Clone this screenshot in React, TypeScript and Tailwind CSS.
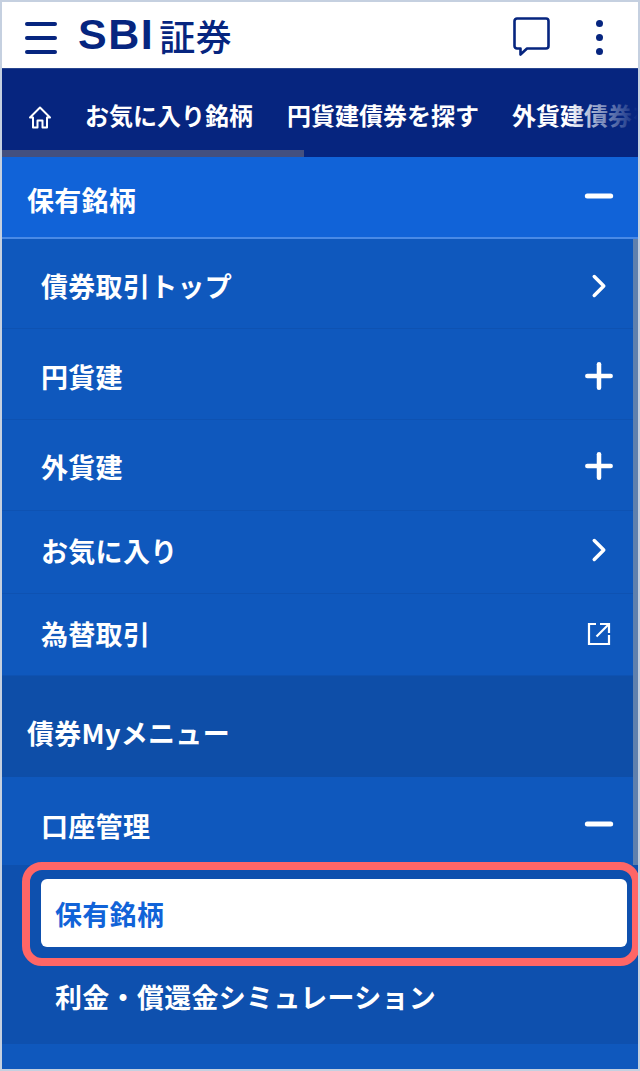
import { ChevronRight, Minus, Plus } from 'lucide-react';
import type { ReactNode } from 'react';

const font = { fontFamily: '"Noto Sans CJK JP", "Noto Sans", sans-serif' };

function OpenIcon() {
  return (
    <svg width="24" height="24" viewBox="0 0 24 24" fill="none" stroke="white" strokeWidth="2.2">
      <path d="M9 2H2v20h20v-9" />
      <path d="M13 2h9v9" />
      <path d="M22 2 9.500 14.500" />
    </svg>
  );
}

function HomeIcon() {
  return (
    <svg className="mt-[5px] shrink-0" width="24" height="23" viewBox="0 0 24 23" fill="none" stroke="white" strokeWidth="2" strokeLinejoin="round">
      <path d="M2 11.500 12 1.500l10 10h-3V21.500h-4.500V14.500h-5V21.500H5V11.500z" />
    </svg>
  );
}

function MenuRow({ label, height, nudge, icon }: { label: string; height: string; nudge: string; icon: ReactNode }) {
  return (
    <div className={`flex items-center justify-between border-b border-[#0e52b2] pl-[39px] pr-[19px] ${height} ${nudge}`}>
      <span className="text-[27px] font-bold leading-none tracking-[0.3px] text-white">{label}</span>
      <span className="flex w-10 justify-center text-white">{icon}</span>
    </div>
  );
}

export default function App() {
  const chevron = <ChevronRight size={38} strokeWidth={2.2} />;
  const plus = <Plus size={40} strokeWidth={2.7} />;

  return (
    <div className="h-[1071px] w-[640px] overflow-hidden border-2 border-[#c5d0e0] bg-[#0f58bd]" style={font}>
      {/* header */}
      <header className="flex h-[66px] items-center bg-white pl-[23px] pr-[35px]">
        <div className="mt-[6px] flex w-8 flex-col gap-[10px]">
          <span className="h-1 rounded-full bg-[#06257f]" />
          <span className="h-1 rounded-full bg-[#06257f]" />
          <span className="h-1 rounded-full bg-[#06257f]" />
        </div>
        <div className="mb-[1px] ml-[21px] flex items-center text-[#06257f]">
          <span className="text-[43px] font-bold leading-none tracking-[1.500px]" style={{ fontFamily: '"Liberation Sans", sans-serif' }}>SBI</span>
          <span className="ml-[5px] text-[36px] font-medium leading-none tracking-[0.5px]">証券</span>
        </div>
        <div className="ml-auto flex items-center gap-[46px]">
          <svg className="mt-[3px]" width="37" height="39" viewBox="0 0 37 39" fill="none" stroke="#06257f" strokeWidth="2.6" strokeLinejoin="round">
            <path d="M4 1.500h29a2.500 2.500 0 0 1 2.500 2.500v25a2.500 2.500 0 0 1-2.500 2.500H14L7.500 37.500v-6H4A2.500 2.500 0 0 1 1.500 29V4A2.500 2.500 0 0 1 4 1.500z" />
          </svg>
          <div className="mt-[4px] flex flex-col gap-[7px]">
            <span className="h-[7px] w-[7px] rounded-full bg-[#06257f]" />
            <span className="h-[7px] w-[7px] rounded-full bg-[#06257f]" />
            <span className="h-[7px] w-[7px] rounded-full bg-[#06257f]" />
          </div>
        </div>
      </header>

      {/* tabs */}
      <nav className="relative h-[89px] overflow-hidden border-t border-[#27458f] bg-[#06257f]">
        <div className="flex h-[81px] items-center whitespace-nowrap pl-[26px] pt-[10px] text-[24px] font-bold text-white">
          <HomeIcon />
          <span className="ml-[33px]">お気に入り銘柄</span>
          <span className="ml-[34px]">円貨建債券を探す</span>
          <span className="ml-[33px]">外貨建債券を探す</span>
        </div>
        <div className="absolute bottom-0 left-0 h-[7px] w-[302px] bg-[#44507f]" />
        <div className="absolute inset-y-0 right-0 w-[70px] bg-gradient-to-r from-[#06257f00] to-[#06257f]" />
      </nav>

      {/* selected section */}
      <div className="flex h-[82px] items-center justify-between border-b-2 border-[#4a8ae6] bg-[#1163d8] pl-[25px] pr-[19px]">
        <span className="mt-[4px] text-[27px] font-bold leading-none tracking-[0.3px] text-white">保有銘柄</span>
        <span className="mb-[2px] flex w-10 justify-center text-white"><Minus size={40} strokeWidth={3} /></span>
      </div>

      <div className="relative">
        <MenuRow label="債券取引トップ" height="h-[90px]" nudge="pt-[4px]" icon={chevron} />
        <MenuRow label="円貨建" height="h-[91px]" nudge="pt-[4px]" icon={plus} />
        <MenuRow label="外貨建" height="h-[91px]" nudge="pt-[2px]" icon={plus} />
        <MenuRow label="お気に入り" height="h-[83px]" nudge="pb-[4px]" icon={chevron} />
        <MenuRow label="為替取引" height="h-[82px]" nudge="pb-[2px]" icon={<OpenIcon />} />

        <div className="flex h-[101px] items-center bg-[#0e4ea8] pl-[25px]">
          <span className="mt-[12px] text-[27px] font-bold leading-none tracking-[0.3px] text-white">債券Myメニュー</span>
        </div>

        <div className="flex h-[88px] items-center justify-between pl-[39px] pr-[19px]">
          <span className="mt-[8px] text-[27px] font-bold leading-none tracking-[0.3px] text-white">口座管理</span>
          <span className="mt-[5px] flex w-10 justify-center text-white"><Minus size={40} strokeWidth={3} /></span>
        </div>

        {/* scrollbar thumb */}
        <div className="absolute right-0 top-0 h-[626px] w-[5px] bg-[#5f80ad]" />

        <div className="relative flex h-[179px] flex-col bg-[#0e50ae] pl-[39px] pr-[11px] pt-[14px]">
          <div className="flex h-[68px] items-center rounded-md bg-white pl-[14px] text-[27px] font-bold leading-none tracking-[0.3px] text-[#1163d8]">
            保有銘柄
          </div>
          <div className="pl-[14px] pt-[36px] text-[27px] font-bold leading-none tracking-[0.3px] text-white">利金・償還金シミュレーション</div>
          <div className="absolute -right-[2px] left-5 top-[-3px] h-[104px] rounded-[20px] border-[8px] border-[#ff6666]" />
        </div>
      </div>
    </div>
  );
}
